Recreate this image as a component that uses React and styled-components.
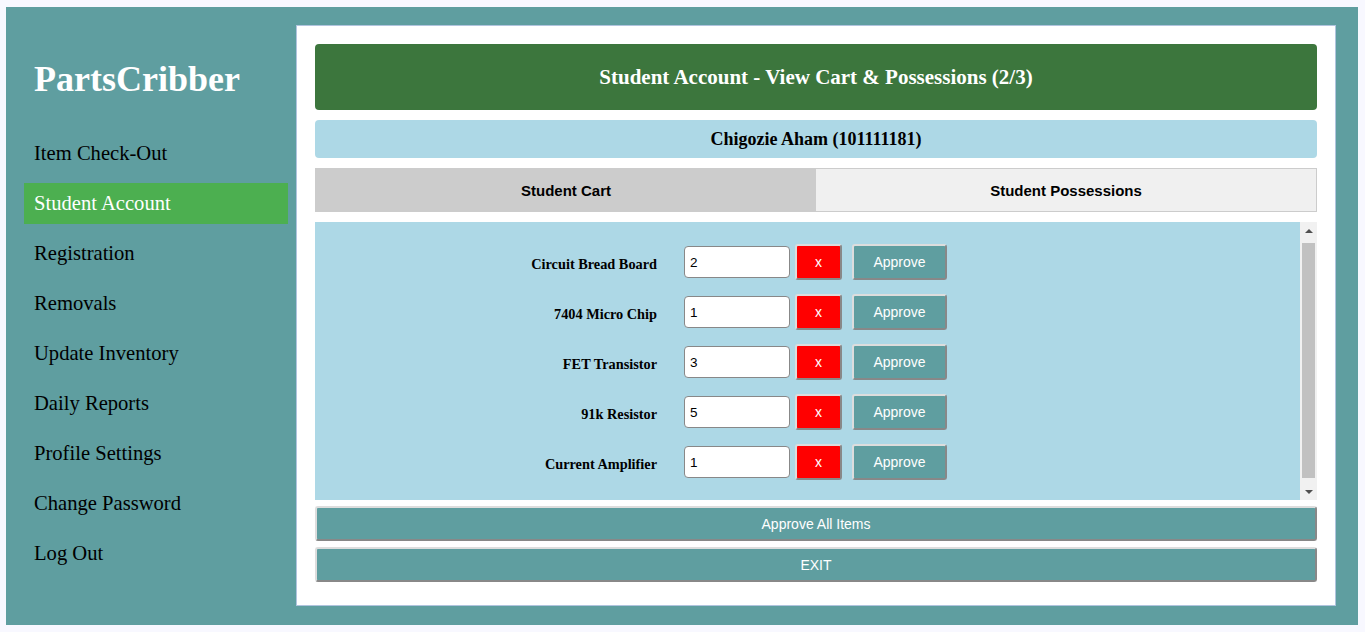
import React from 'react'
import styled, { createGlobalStyle } from 'styled-components'

const GlobalStyle = createGlobalStyle`
  body {
    margin: 0;
    background: #f8f8ff;
    font-family: 'Liberation Serif', 'Times New Roman', serif;
  }
`

const navItems = [
  'Item Check-Out',
  'Student Account',
  'Registration',
  'Removals',
  'Update Inventory',
  'Daily Reports',
  'Profile Settings',
  'Change Password',
  'Log Out',
]

const cart = [
  { name: 'Circuit Bread Board', qty: '2' },
  { name: '7404 Micro Chip', qty: '1' },
  { name: 'FET Transistor', qty: '3' },
  { name: '91k Resistor', qty: '5' },
  { name: 'Current Amplifier', qty: '1' },
]

const App = () => (
  <>
    <GlobalStyle />
    <Wrapper>
      <Sidebar>
        <Brand>PartsCribber</Brand>
        <Nav>
          {navItems.map(item => (
            <NavItem key={item} active={item === 'Student Account'}>{item}</NavItem>
          ))}
        </Nav>
      </Sidebar>
      <Panel>
        <Header>Student Account - View Cart &amp; Possessions (2/3)</Header>
        <NameBar>Chigozie Aham (101111181)</NameBar>
        <Tabs>
          <Tab active>Student Cart</Tab>
          <Tab>Student Possessions</Tab>
        </Tabs>
        <CartArea>
          <CartList>
            {cart.map(row => (
              <CartRow key={row.name}>
                <ItemName>{row.name}</ItemName>
                <Qty defaultValue={row.qty} />
                <RemoveBtn>x</RemoveBtn>
                <ApproveBtn>Approve</ApproveBtn>
              </CartRow>
            ))}
          </CartList>
          <ScrollBar>
            <Arrow up />
            <Thumb />
            <Arrow />
          </ScrollBar>
        </CartArea>
        <WideBtn>Approve All Items</WideBtn>
        <WideBtn>EXIT</WideBtn>
      </Panel>
    </Wrapper>
  </>
)

const Wrapper = styled.div`
  display: flex;
  margin: 7px 7px 7px 6px;
  width: 1352px;
  height: 618px;
  box-sizing: border-box;
  padding: 18px 22px 19px 0;
  background: #5f9ea0;
`
const Sidebar = styled.div`
  width: 290px;
  flex-shrink: 0;
  padding: 34px 8px 0 18px;
  box-sizing: border-box;
`
const Brand = styled.h1`
  margin: 0 0 33px 10px;
  font-size: 36px;
  line-height: 41px;
  font-weight: bold;
  color: #fff;
`
const Nav = styled.div`
  display: flex;
  flex-direction: column;
  gap: 9px;
`
const NavItem = styled.div`
  height: 41px;
  line-height: 41px;
  padding-left: 10px;
  font-size: 20.6px;
  color: ${p => (p.active ? '#fff' : '#000')};
  background: ${p => (p.active ? '#4caf50' : 'transparent')};
`
const Panel = styled.div`
  flex: 1;
  display: flex;
  flex-direction: column;
  background: #fff;
  border: 1px solid #b0c4de;
  padding: 18px 18px 0;
`
const Header = styled.div`
  height: 66px;
  line-height: 66px;
  border-radius: 4px;
  background: #3c763d;
  color: #fff;
  text-align: center;
  font-size: 21px;
  font-weight: bold;
`
const NameBar = styled.div`
  margin-top: 10px;
  height: 38px;
  line-height: 38px;
  border-radius: 4px;
  background: #add8e6;
  text-align: center;
  font-size: 18px;
  font-weight: bold;
`
const Tabs = styled.div`
  display: flex;
  margin-top: 10px;
  border: 1px solid #ccc;
`
const Tab = styled.div`
  flex: 1;
  height: 42px;
  line-height: 43px;
  text-align: center;
  font-family: 'Liberation Sans', Arial, sans-serif;
  font-size: 15px;
  font-weight: bold;
  background: ${p => (p.active ? '#ccc' : '#f0f0f0')};
`
const CartArea = styled.div`
  display: flex;
  margin-top: 10px;
  height: 278px;
  background: #add8e6;
`
const CartList = styled.div`
  flex: 1;
  overflow: hidden;
  padding-top: 22px;
  display: flex;
  flex-direction: column;
  gap: 14px;
`
const ScrollBar = styled.div`
  width: 17px;
  display: flex;
  flex-direction: column;
  background: #f1f1f1;
`
const Arrow = styled.div`
  height: 17px;
  display: flex;
  align-items: center;
  justify-content: center;
  &::before {
    content: '';
    border-left: 4px solid transparent;
    border-right: 4px solid transparent;
    ${p => (p.up ? 'border-bottom' : 'border-top')}: 4px solid #505050;
  }
`
const Thumb = styled.div`
  flex: 1;
  margin: 4px 2px 5px;
  background: #c1c1c1;
`
const CartRow = styled.div`
  display: flex;
  align-items: center;
  height: 36px;
  flex-shrink: 0;
`
const ItemName = styled.span`
  width: 342px;
  text-align: right;
  font-size: 14.3px;
  font-weight: bold;
  margin-right: 27px;
  padding-top: 4px;
`
const Qty = styled.input`
  width: 106px;
  height: 32px;
  box-sizing: border-box;
  border: 1px solid #888;
  border-radius: 4px;
  padding: 0 5px;
  font-family: 'Liberation Sans', Arial, sans-serif;
  font-size: 13.5px;
`
const buttonBase = `
  height: 36px;
  box-sizing: border-box;
  border: 2px solid;
  border-color: #ddd #888 #888 #ddd;
  border-radius: 3px;
  color: #fff;
  font-family: 'Liberation Sans', Arial, sans-serif;
  font-size: 14px;
  cursor: pointer;
`
const RemoveBtn = styled.button`
  ${buttonBase}
  width: 47px;
  margin-left: 5px;
  background: #f00;
`
const ApproveBtn = styled.button`
  ${buttonBase}
  width: 95px;
  margin-left: 10px;
  background: #5f9ea0;
`
const WideBtn = styled.button`
  ${buttonBase}
  width: 100%;
  height: 35px;
  margin-top: 6px;
  background: #5f9ea0;
`

export default App
